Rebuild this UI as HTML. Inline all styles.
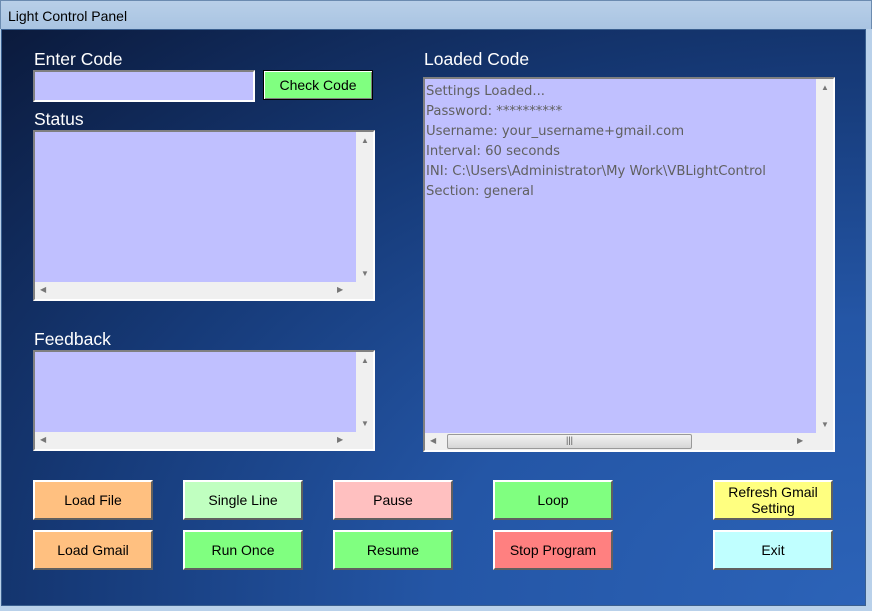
<!DOCTYPE html><html><head><style>
*{margin:0;padding:0;box-sizing:border-box}
body{width:872px;height:611px;overflow:hidden;position:relative;background:#b9d1ea;font-family:"Liberation Sans",sans-serif}
.title{position:absolute;left:0;top:0;width:872px;height:29px;background:linear-gradient(#b8cfe8,#a9c4e2);border:1px solid #6b8bb0;border-bottom:none}
.title span{position:absolute;left:7px;top:7px;font-size:14px;color:#000}
.client{position:absolute;left:1px;top:29px;width:865px;height:577px;overflow:hidden;background:radial-gradient(ellipse at 100% 100%,#2c63b8 0%,#2456a6 35%,#163a78 65%,#0b1a3c 100%);border:1px solid #3a5f8f}
.lbl{position:absolute;color:#fff;font-size:17.5px}
.box{position:absolute;background:#c0c0ff;border:2px solid;border-color:#808080 #fff #fff #808080}
.vs{position:absolute;right:0;top:0;width:17px;background:#f0f0f0}
.hs{position:absolute;left:0;bottom:0;height:17px;background:#f0f0f0}
.btn{position:absolute;width:120px;height:40px;border:2px solid;border-color:#fff #606060 #606060 #fff;font-size:14px;display:flex;align-items:center;justify-content:center;text-align:center;line-height:16px;color:#000}
.ar{position:absolute;font-size:8px;color:#777}
.code{position:absolute;left:1px;top:3px;font-family:"DejaVu Sans",sans-serif;font-size:13.2px;line-height:20px;color:#606060;white-space:nowrap}
</style></head><body>
<div class="title"><span>Light Control Panel</span></div>
<div class="client">
<div class="lbl" style="left:32px;top:19px">Enter Code</div>
<div class="box" style="left:31px;top:40px;width:222px;height:32px"></div>
<div class="btn" style="left:261px;top:40px;width:110px;height:30px;background:#80ff80;border:1px solid #000;box-shadow:inset 1px 1px #fff,inset -1px -1px #808080">Check Code</div>
<div class="lbl" style="left:32px;top:79px">Status</div>
<div class="box" style="left:31px;top:100px;width:342px;height:171px"><div class="vs" style="height:150px"><span class="ar" style="left:5px;top:4px">▲</span><span class="ar" style="left:5px;bottom:4px">▼</span></div><div class="hs" style="width:338px"><span class="ar" style="left:5px;top:3px">◀</span><span class="ar" style="left:302px;top:3px">▶</span></div></div>
<div class="lbl" style="left:32px;top:299px">Feedback</div>
<div class="box" style="left:31px;top:320px;width:342px;height:101px"><div class="vs" style="height:80px"><span class="ar" style="left:5px;top:4px">▲</span><span class="ar" style="left:5px;bottom:4px">▼</span></div><div class="hs" style="width:338px"><span class="ar" style="left:5px;top:3px">◀</span><span class="ar" style="left:302px;top:3px">▶</span></div></div>
<div class="lbl" style="left:422px;top:19px">Loaded Code</div>
<div class="box" style="left:421px;top:47px;width:412px;height:375px;overflow:hidden">
<div class="code">Settings Loaded...<br>Password: **********<br>Username: your_username+gmail.com<br>Interval: 60 seconds<br>INI: C:\Users\Administrator\My Work\VBLightControl<br>Section: general</div>
<div class="vs" style="height:354px"><span class="ar" style="left:5px;top:4px">▲</span><span class="ar" style="left:5px;bottom:4px">▼</span></div>
<div class="hs" style="width:408px"><span class="ar" style="left:5px;top:3px">◀</span><div style="position:absolute;left:22px;top:1px;width:245px;height:15px;background:linear-gradient(#f2f2f2,#d6d6d6);border:1px solid #999;border-radius:2px;font-size:9px;text-align:center;color:#555">|||</div><span class="ar" style="left:372px;top:3px">▶</span></div>
<div style="position:absolute;right:0;bottom:0;width:17px;height:17px;background:#f0f0f0"></div>
</div>
<div class="btn" style="left:31px;top:450px;background:#ffc080">Load File</div>
<div class="btn" style="left:181px;top:450px;background:#c0ffc0">Single Line</div>
<div class="btn" style="left:331px;top:450px;background:#ffc0c0">Pause</div>
<div class="btn" style="left:491px;top:450px;background:#80ff80">Loop</div>
<div class="btn" style="left:711px;top:450px;background:#ffff80">Refresh Gmail<br>Setting</div>
<div class="btn" style="left:31px;top:500px;background:#ffc080">Load Gmail</div>
<div class="btn" style="left:181px;top:500px;background:#80ff80">Run Once</div>
<div class="btn" style="left:331px;top:500px;background:#80ff80">Resume</div>
<div class="btn" style="left:491px;top:500px;background:#ff8080">Stop Program</div>
<div class="btn" style="left:711px;top:500px;background:#c0ffff">Exit</div>
</div>
</body></html>
